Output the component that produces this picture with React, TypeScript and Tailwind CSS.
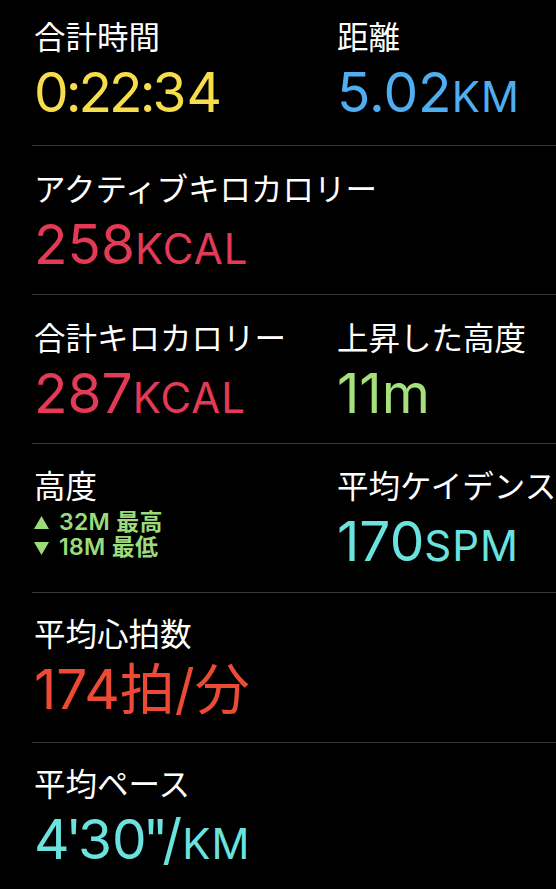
import React from 'react';

const NUM = "font-['Inter','Noto_Sans_CJK_JP',sans-serif]";
const JP = "font-['Noto_Sans_CJK_JP','Noto_Sans',sans-serif]";

type Metric = {
  label: string;
  value: React.ReactNode;
  color: string;
};

const Unit = ({ children }: { children: React.ReactNode }) => (
  <span className="text-[42px] tracking-[1px]">{children}</span>
);

function Cell({ label, value, color, extra }: Metric & { extra?: React.ReactNode }) {
  return (
    <div className="flex flex-col whitespace-nowrap">
      <div className={`${JP} text-[31.5px] leading-[36px] text-white`}>{label}</div>
      {extra}
      {value !== null && (
        <div className={`${NUM} text-[55px] leading-[56px] mt-[11px] [font-weight:380] ${color}`}>{value}</div>
      )}
    </div>
  );
}

function Row({ children, h, pt, last }: { children: React.ReactNode; h: string; pt: string; last?: boolean }) {
  return (
    <div className={`ml-8 pl-[2px] flex ${h} ${pt} ${last ? '' : 'border-b border-[#38383a]'}`}>
      {children}
    </div>
  );
}

const Tri = ({ down }: { down?: boolean }) => (
  <svg width="15" height="14" viewBox="0 0 15 14" className="mr-[10px] shrink-0">
    {down ? <path d="M0 1 H15 L7.5 14 Z" fill="currentColor" /> : <path d="M7.5 0 L15 13 H0 Z" fill="currentColor" />}
  </svg>
);

export default function App() {
  return (
    <div className="w-[556px] h-[889px] bg-black overflow-hidden antialiased">
      <Row h="h-[146px]" pt="pt-[17px]">
        <div className="w-[303px] shrink-0">
          <Cell
            label="合計時間"
            color="text-[#F5DD4C]"
            value={<><span className="tracking-[-3px]">0:</span><span className="tracking-[-3px]">22:</span>34</>}
          />
        </div>
        <Cell label="距離" color="text-[#4FAEF2]" value={<>5.02<Unit>KM</Unit></>} />
      </Row>

      <Row h="h-[149px]" pt="pt-[23px]">
        <Cell label="アクティブキロカロリー" color="text-[#E33A55]" value={<>258<Unit>KCAL</Unit></>} />
      </Row>

      <Row h="h-[149px]" pt="pt-[23px]">
        <div className="w-[303px] shrink-0">
          <Cell label="合計キロカロリー" color="text-[#E33A55]" value={<>287<Unit>KCAL</Unit></>} />
        </div>
        <Cell label="上昇した高度" color="text-[#A4E07C]" value={<>11m</>} />
      </Row>

      <Row h="h-[149px]" pt="pt-[22px]">
        <div className="w-[303px] shrink-0">
          <Cell
            label="高度"
            color=""
            value={null}
            extra={
              <div className={`${NUM} text-[23px] leading-[25px] tracking-[0.3px] font-semibold text-[#9CDB7B] mt-[8px]`}>
                <div className="flex items-center h-[25px]">
                  <Tri />
                  <span className="leading-[25px]">32M 最高</span>
                </div>
                <div className="flex items-center h-[25px]">
                  <Tri down />
                  <span className="leading-[25px]">18M 最低</span>
                </div>
              </div>
            }
          />
        </div>
        <Cell label="平均ケイデンス" color="text-[#6CE2DF]" value={<>170<Unit>SPM</Unit></>} />
      </Row>

      <Row h="h-[150px]" pt="pt-[21px]">
        <Cell label="平均心拍数" color="text-[#EC4A35]" value={<>174拍/分</>} />
      </Row>

      <Row h="h-[146px]" pt="pt-[21px]" last>
        <Cell
          label="平均ペース"
          color="text-[#6CE2DF]"
          value={
            <>
              <span className="tracking-[-4px]">4'</span>3<span className="tracking-[-4px]">0</span>
              <span className="tracking-[-6px]">"</span>/<Unit>KM</Unit>
            </>
          }
        />
      </Row>
    </div>
  );
}
